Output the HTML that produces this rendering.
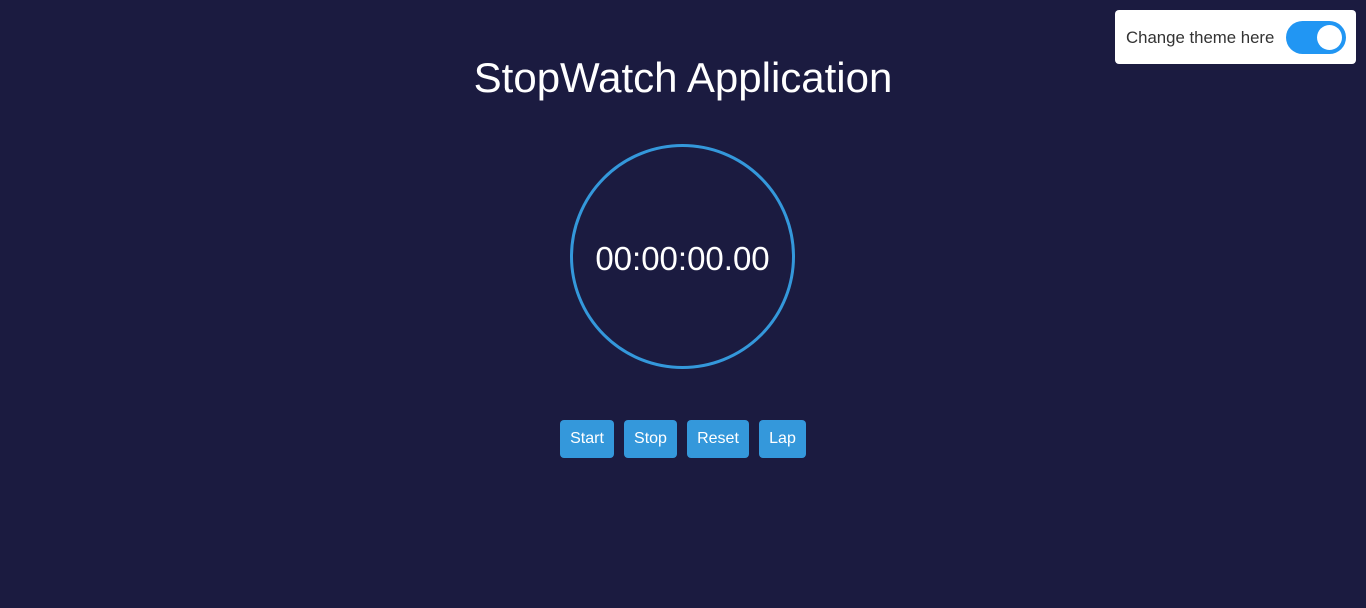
<!DOCTYPE html>
<html><head><style>
body{margin:0;width:1366px;height:608px;background:#1b1b40;font-family:"Liberation Sans",sans-serif;position:relative;overflow:hidden}
.tog{position:absolute;left:1115px;top:10px;width:241px;height:54px;background:#fff;border-radius:4px}
.tog span{position:absolute;left:11px;top:18px;font-size:16.8px;color:#333}
.sw{position:absolute;left:171px;top:11px;width:60px;height:33px;background:#2196f3;border-radius:17px}
.sw i{position:absolute;right:4px;top:4px;width:25px;height:25px;background:#fff;border-radius:50%}
h1{position:absolute;left:0;width:1366px;top:54px;margin:0;text-align:center;font-weight:normal;font-size:42px;color:#fff}
.c{position:absolute;left:570px;top:144px;width:219px;height:219px;border:3px solid #3498db;border-radius:50%;box-sizing:content-box}
.c div{position:absolute;width:100%;top:93px;text-align:center;color:#fff;font-size:33px}
.b{position:absolute;top:420px;height:38px;background:#3498db;color:#fff;border-radius:4px;font-size:16px;line-height:38px;text-align:center}
</style></head><body>
<div class="tog"><span>Change theme here</span><div class="sw"><i></i></div></div>
<h1>StopWatch Application</h1>
<div class="c"><div>00:00:00.00</div></div>
<div class="b" style="left:560px;width:54px">Start</div>
<div class="b" style="left:624px;width:53px">Stop</div>
<div class="b" style="left:687px;width:62px">Reset</div>
<div class="b" style="left:759px;width:47px">Lap</div>
</body></html>
